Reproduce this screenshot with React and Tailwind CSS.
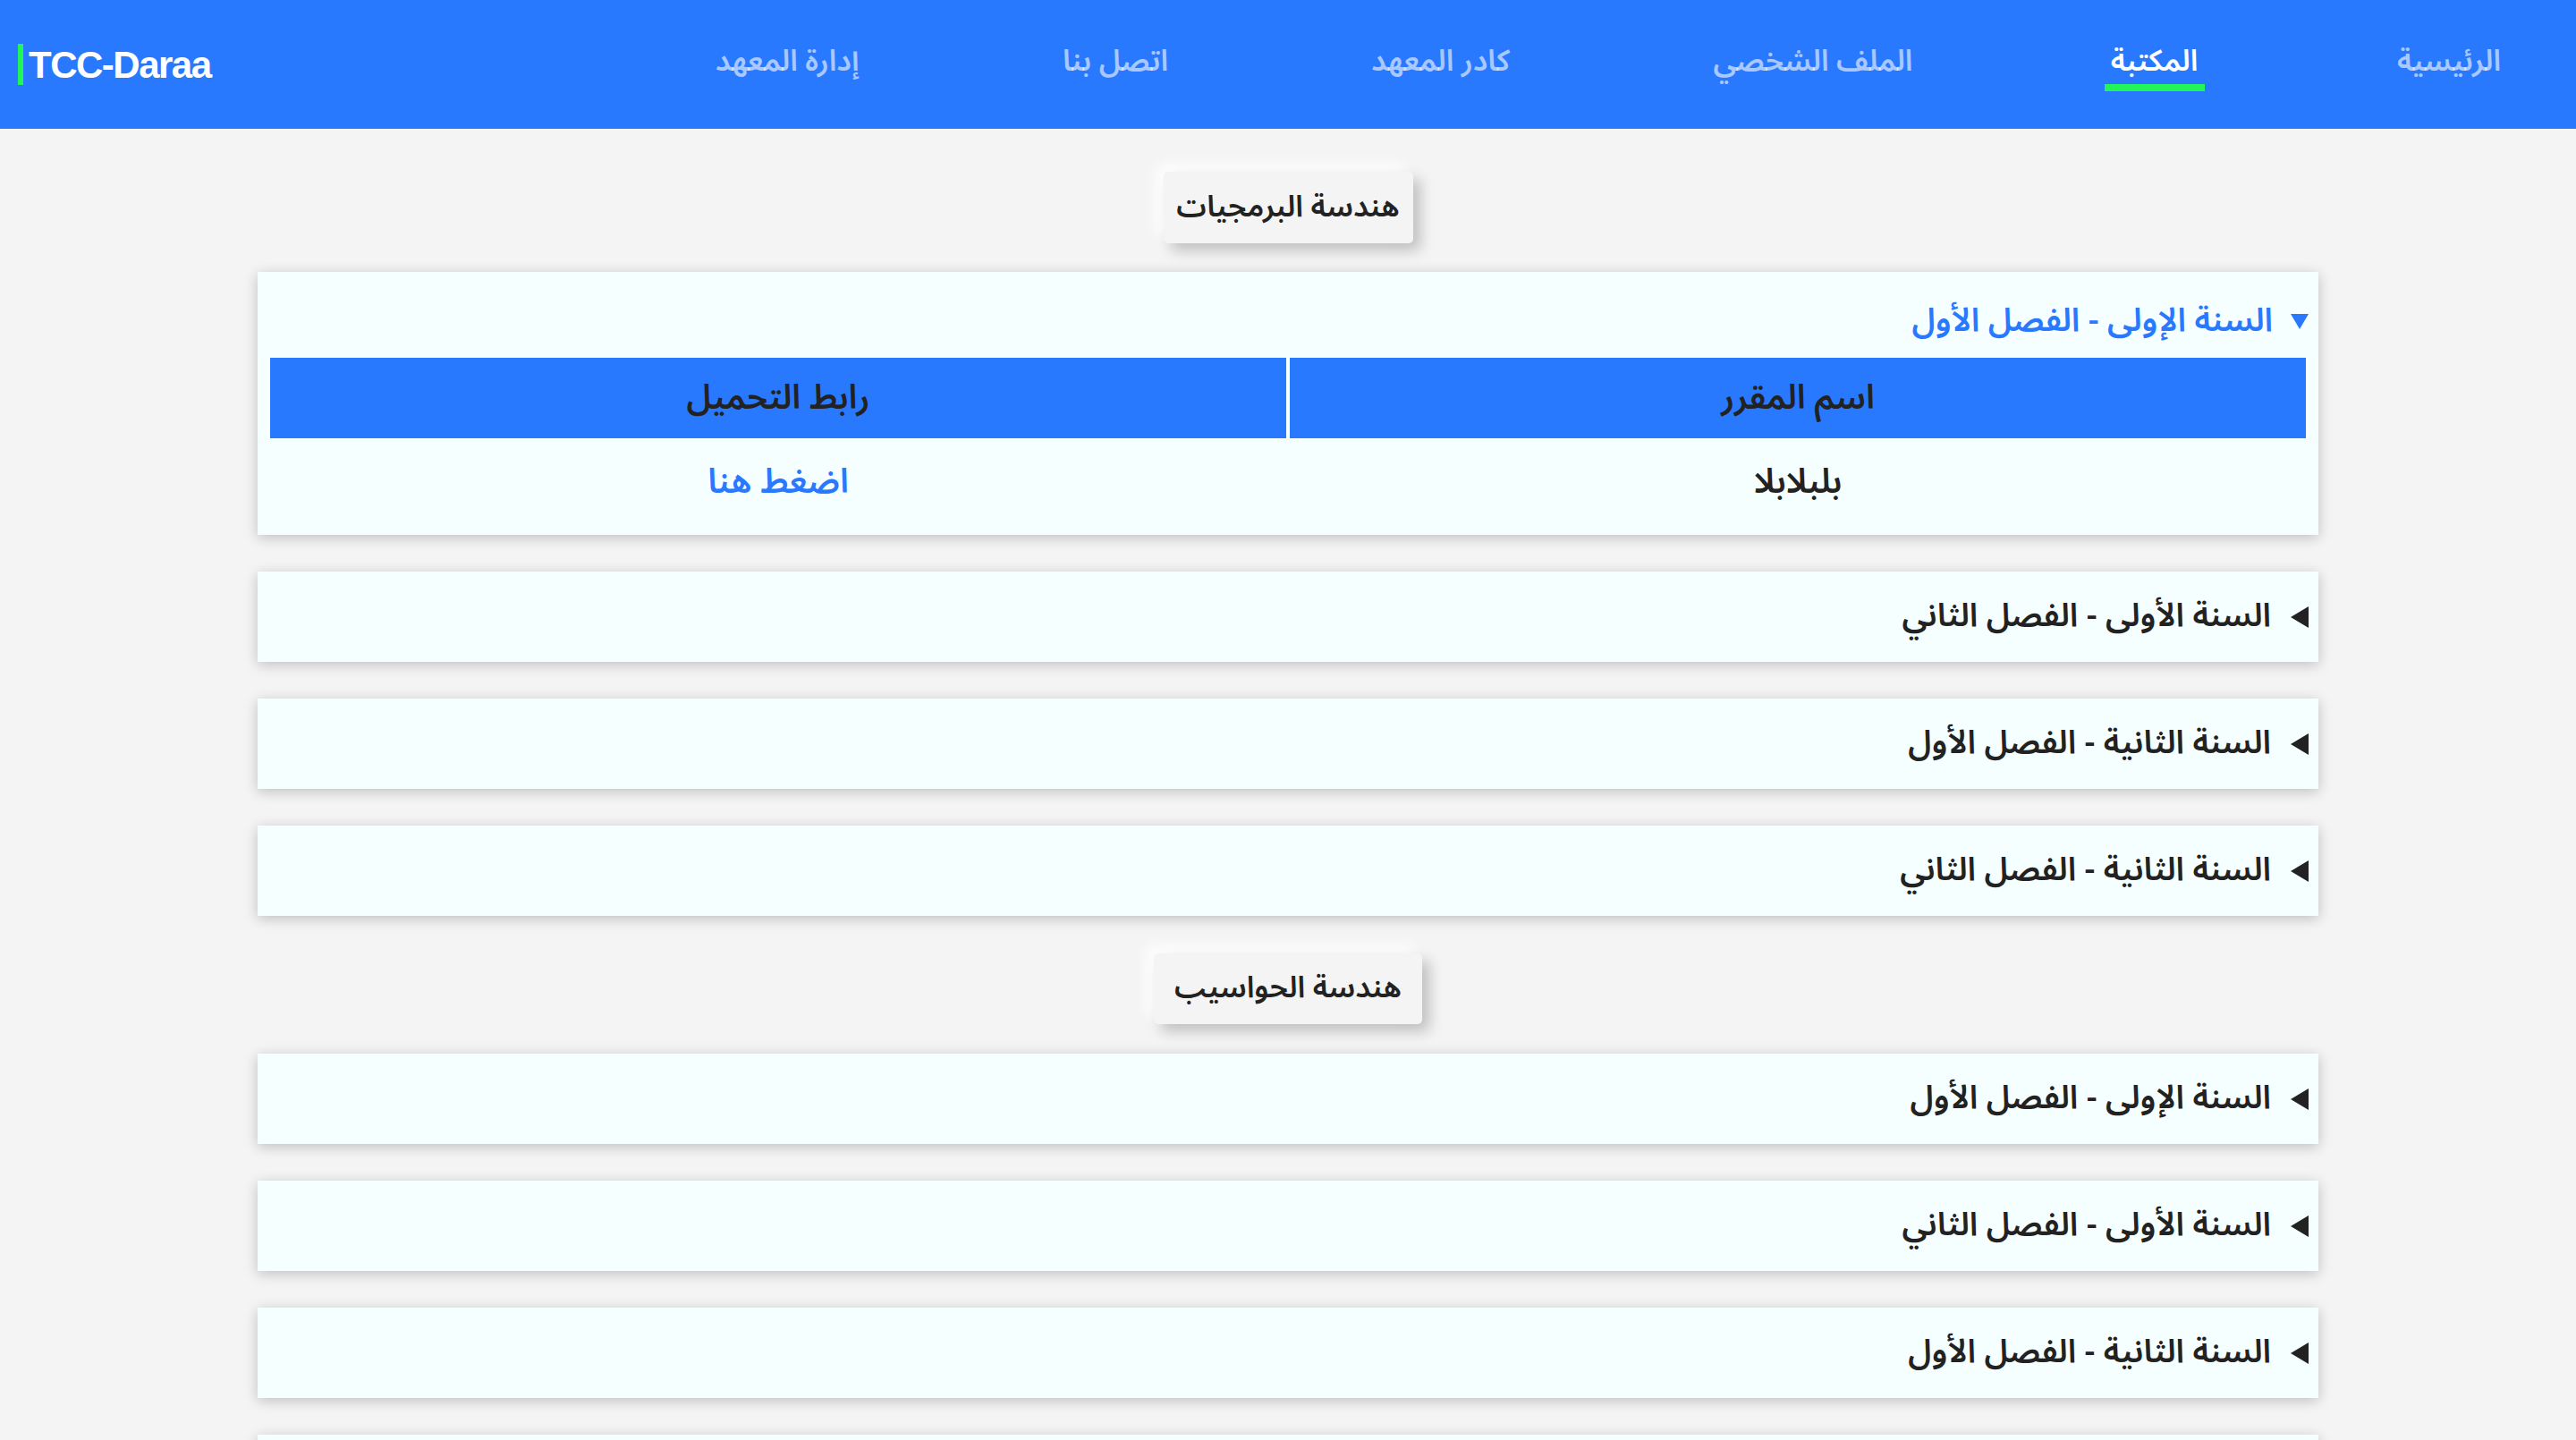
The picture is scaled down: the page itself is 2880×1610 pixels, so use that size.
const arabic = { fontFamily: '"Noto Sans Arabic", "DejaVu Sans", sans-serif' }

const navItems = [
  { label: "الرئيسية", w: "w-[118px]" },
  { label: "المكتبة", w: "w-[101px]", active: true },
  { label: "الملف الشخصي", w: "w-[222px]" },
  { label: "كادر المعهد", w: "w-[171px]" },
  { label: "اتصل بنا", w: "w-[116px]" },
  { label: "إدارة المعهد", w: "w-[178px]" },
]

function Caret({ open }) {
  if (open) {
    return (
      <svg width="22" height="22" viewBox="0 0 22 22" className="shrink-0">
        <path d="M1 3 L21 3 L11 20 Z" fill="#2979ff" />
      </svg>
    )
  }
  return (
    <svg width="22" height="26" viewBox="0 0 22 26" className="shrink-0">
      <path d="M21 1 L21 25 L1 13 Z" fill="#222222" />
    </svg>
  )
}

function ClosedCard({ title }) {
  return (
    <div className="h-[101px] bg-[#f5ffff] shadow-[0_3px_14px_rgba(0,0,0,0.22)] flex items-center gap-[21px] pr-[10px]">
      <Caret />
      <span className="text-[36.5px] font-semibold text-[#222] leading-none">{title}</span>
    </div>
  )
}

function OpenCard({ title }) {
  return (
    <div className="bg-[#f5ffff] shadow-[0_3px_14px_rgba(0,0,0,0.22)] p-[14px]">
      <div className="h-[82px] flex items-center gap-[19px] -mr-[4px]">
        <Caret open />
        <span className="text-[36.5px] font-semibold text-[#2979ff] leading-none">{title}</span>
      </div>
      <div className="grid grid-cols-2 gap-[4px]">
        <div className="h-[90px] bg-[#2979ff] flex items-center justify-center text-[38px] font-semibold text-[#222]">
          اسم المقرر
        </div>
        <div className="h-[90px] bg-[#2979ff] flex items-center justify-center text-[38px] font-semibold text-[#222]">
          رابط التحميل
        </div>
        <div className="h-[90px] flex items-center justify-center text-[38px] font-semibold text-[#222]">
          بلبلابلا
        </div>
        <div className="h-[90px] flex items-center justify-center text-[38px] font-semibold text-[#2979ff]">
          <a href="#">اضغط هنا</a>
        </div>
      </div>
    </div>
  )
}

function SectionTitle({ children, w, h }) {
  return (
    <div className="flex justify-center">
      <div
        className={`${w} ${h} rounded-[5px] bg-[#f4f4f4] flex items-center justify-center text-[33.5px] font-semibold text-[#222] shadow-[8px_8px_16px_rgba(0,0,0,0.22),-8px_-8px_16px_#ffffff]`}
      >
        {children}
      </div>
    </div>
  )
}

export default function App() {
  return (
    <div dir="rtl" className="min-h-screen bg-[#f4f4f4]" style={arabic}>
      <header className="h-[144px] bg-[#2979ff] flex justify-between">
        <nav className="flex gap-[220px] pr-[83px] pt-[47px]">
          {navItems.map((item) => (
            <div key={item.label} className={`${item.w} flex flex-col items-center`}>
              <span
                className={`h-[44px] leading-[44px] whitespace-nowrap text-[33px] font-semibold ${
                  item.active ? "text-white" : "text-white/60"
                }`}
              >
                {item.label}
              </span>
              <span
                className={`mt-[3px] h-[8px] w-[112px] ${item.active ? "bg-[#22f55a]" : "bg-transparent"}`}
              />
            </div>
          ))}
        </nav>
        <div className="flex items-center pl-[20px]" dir="ltr">
          <div
            className="border-l-[6px] border-[#22f55a] pl-[6px] h-[46px] flex items-center text-[42px] font-bold text-white tracking-[-1.5px]"
            style={{ fontFamily: '"Liberation Sans", Arial, sans-serif' }}
          >
            TCC-Daraa
          </div>
        </div>
      </header>

      <main className="w-[2304px] mx-auto pt-[48px] pb-[60px]">
        <SectionTitle w="w-[279px]" h="h-[80px]">هندسة البرمجيات</SectionTitle>
        <div className="flex flex-col gap-[41px] mt-[32px]">
          <OpenCard title="السنة الإولى - الفصل الأول" />
          <ClosedCard title="السنة الأولى - الفصل الثاني" />
          <ClosedCard title="السنة الثانية - الفصل الأول" />
          <ClosedCard title="السنة الثانية - الفصل الثاني" />
        </div>

        <div className="mt-[42px]">
          <SectionTitle w="w-[300px]" h="h-[79px]">هندسة الحواسيب</SectionTitle>
        </div>
        <div className="flex flex-col gap-[41px] mt-[33px]">
          <ClosedCard title="السنة الإولى - الفصل الأول" />
          <ClosedCard title="السنة الأولى - الفصل الثاني" />
          <ClosedCard title="السنة الثانية - الفصل الأول" />
          <ClosedCard title="السنة الثانية - الفصل الثاني" />
        </div>
      </main>
    </div>
  )
}
